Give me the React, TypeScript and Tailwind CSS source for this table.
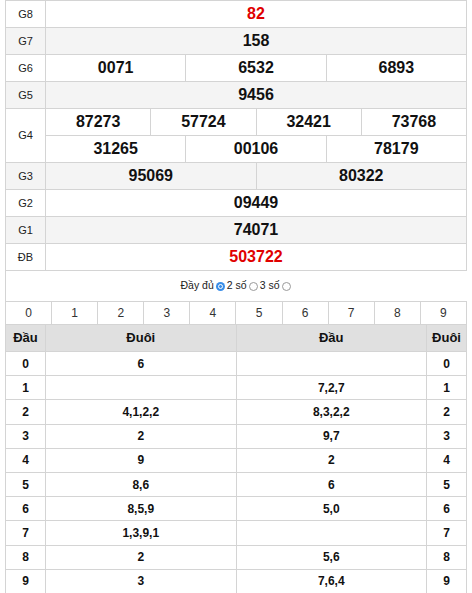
const prizes: { label: string; rows: string[][]; red?: boolean }[] = [
  { label: 'G8', rows: [['82']], red: true },
  { label: 'G7', rows: [['158']] },
  { label: 'G6', rows: [['0071', '6532', '6893']] },
  { label: 'G5', rows: [['9456']] },
  { label: 'G4', rows: [['87273', '57724', '32421', '73768'], ['31265', '00106', '78179']] },
  { label: 'G3', rows: [['95069', '80322']] },
  { label: 'G2', rows: [['09449']] },
  { label: 'G1', rows: [['74071']] },
  { label: 'ĐB', rows: [['503722']], red: true },
];

const lotos: [string, string, string][] = [
  ['0', '6', ''],
  ['1', '', '7,2,7'],
  ['2', '4,1,2,2', '8,3,2,2'],
  ['3', '2', '9,7'],
  ['4', '9', '2'],
  ['5', '8,6', '6'],
  ['6', '8,5,9', '5,0'],
  ['7', '1,3,9,1', ''],
  ['8', '2', '5,6'],
  ['9', '3', '7,6,4'],
];

function Radio({ checked }: { checked?: boolean }) {
  return checked ? (
    <span className="inline-flex w-[9px] h-[9px] rounded-full bg-[#3b8ee8] items-center justify-center mx-[2px]">
      <span className="w-[5px] h-[5px] rounded-full border border-white bg-[#3b8ee8]" />
    </span>
  ) : (
    <span className="inline-block w-[9px] h-[9px] rounded-full border border-[#9a9a9a] bg-white mx-[2px]" />
  );
}

export default function App() {
  return (
    <div className="w-[472px] bg-white px-[5px] text-[#222]" style={{ fontFamily: '"Liberation Sans", Arial, sans-serif' }}>
      {/* Results */}
      <div className="border-l border-t border-[#d4d4d4]">
        {prizes.map((p, i) => (
          <div key={p.label} className={`flex ${i % 2 === 1 ? 'bg-[#f4f4f4]' : 'bg-white'}`}>
            <div className="w-[40px] shrink-0 flex items-center justify-center text-[11px] border-r border-b border-[#d4d4d4]">
              {p.label}
            </div>
            <div className="flex-1 flex flex-col">
              {p.rows.map((r, j) => (
                <div key={j} className="flex h-[27px]">
                  {r.map((n) => (
                    <div
                      key={n}
                      className={`flex-1 basis-0 flex items-center justify-center border-r border-b border-[#d4d4d4] text-[16px] font-bold ${p.red ? 'text-[#e00000]' : 'text-[#111]'}`}
                    >
                      {n}
                    </div>
                  ))}
                </div>
              ))}
            </div>
          </div>
        ))}
      </div>

      {/* Options */}
      <div className="h-[30px] border-l border-[#d4d4d4] flex items-center justify-center text-[10.5px] text-[#222]">
        <span>Đầy đủ</span>
        <Radio checked />
        <span>2 số</span>
        <Radio />
        <span>3 số</span>
        <Radio />
      </div>

      {/* Loto */}
      <div className="border-l border-t border-[#d4d4d4]">
        <div className="flex h-[23px]">
          {['0', '1', '2', '3', '4', '5', '6', '7', '8', '9'].map((d) => (
            <div key={d} className="flex-1 basis-0 flex items-center justify-center border-r border-b border-[#d4d4d4] text-[12px] text-[#333]">
              {d}
            </div>
          ))}
        </div>
        <div className="flex h-[27px] bg-[#e0e0e0] font-bold text-[13px] text-[#111]">
          <div className="w-[40px] flex items-center justify-center border-r border-b border-[#d4d4d4]">Đầu</div>
          <div className="flex-1 basis-0 flex items-center justify-center border-r border-b border-[#d4d4d4]">Đuôi</div>
          <div className="flex-1 basis-0 flex items-center justify-center border-r border-b border-[#d4d4d4]">Đầu</div>
          <div className="w-[40px] flex items-center justify-center border-r border-b border-[#d4d4d4]">Đuôi</div>
        </div>
        {lotos.map(([d, tail, head]) => (
          <div key={d} className="flex h-[24.2px] font-bold text-[12px] text-[#111]">
            <div className="w-[40px] flex items-center justify-center border-r border-b border-[#d4d4d4]">{d}</div>
            <div className="flex-1 basis-0 flex items-center justify-center border-r border-b border-[#d4d4d4]">{tail}</div>
            <div className="flex-1 basis-0 flex items-center justify-center border-r border-b border-[#d4d4d4]">{head}</div>
            <div className="w-[40px] flex items-center justify-center border-r border-b border-[#d4d4d4]">{d}</div>
          </div>
        ))}
      </div>
    </div>
  );
}
